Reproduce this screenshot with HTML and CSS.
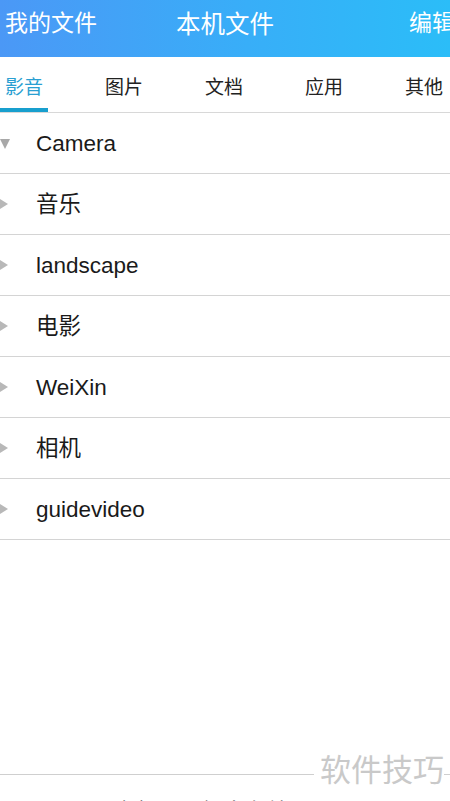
FILE: index.html
```html
<!DOCTYPE html>
<html lang="zh">
<head>
<meta charset="utf-8">
<link rel="stylesheet" href="styles.css">
</head>
<body>
<div class="page">
  <header class="topbar">
    <span class="back">我的文件</span>
    <span class="title">本机文件</span>
    <span class="edit">编辑</span>
  </header>
  <nav class="tabs">
    <div class="tab active"><span>影音</span></div>
    <div class="tab"><span>图片</span></div>
    <div class="tab"><span>文档</span></div>
    <div class="tab"><span>应用</span></div>
    <div class="tab"><span>其他</span></div>
  </nav>
  <ul class="list">
    <li class="row open"><i class="arrow"></i><span class="name">Camera</span></li>
    <li class="row"><i class="arrow"></i><span class="name">音乐</span></li>
    <li class="row"><i class="arrow"></i><span class="name">landscape</span></li>
    <li class="row"><i class="arrow"></i><span class="name">电影</span></li>
    <li class="row"><i class="arrow"></i><span class="name">WeiXin</span></li>
    <li class="row"><i class="arrow"></i><span class="name">相机</span></li>
    <li class="row"><i class="arrow"></i><span class="name">guidevideo</span></li>
  </ul>
  <footer class="footer">
    <span class="foot-text">全部　已经本存储</span>
  </footer>
  <div class="watermark">软件技巧</div>
</div>
</body>
</html>
```
FILE: styles.css
```css
* { box-sizing: border-box; }
html, body { margin: 0; padding: 0; background: #fff; }
body {
  font-family: "Liberation Sans", "Noto Sans CJK SC", sans-serif;
  color: #1a1a1a;
}
.page {
  position: relative;
  width: 450px;
  height: 801px;
  overflow: hidden;
  display: flex;
  flex-direction: column;
}
.topbar {
  height: 57px;
  flex: 0 0 57px;
  display: flex;
  align-items: center;
  padding: 0 0 16px 5px;
  background: linear-gradient(90deg, #4b98f6 0%, #38aef8 55%, #2bbdf8 100%);
  color: #fff;
  white-space: nowrap;
  font-family: "Noto Sans CJK SC", sans-serif;
}
.back { font-size: 23px; line-height: 30px; }
.title { font-size: 24.5px; line-height: 30px; margin-left: 79px; margin-top: 4px; }
.edit { font-size: 23px; line-height: 30px; margin-left: 135px; flex: 0 0 auto; }
.tabs {
  flex: 0 0 56px;
  height: 56px;
  display: flex;
  border-bottom: 1px solid #d8d8d8;
  font-family: "Noto Sans CJK SC", sans-serif;
}
.tab { flex: 0 0 100px; }
.tab span {
  display: inline-block;
  height: 55px;
  padding: 17px 5px 0;
  font-size: 19px;
  line-height: 24px;
  color: #222;
  border-bottom: 4px solid transparent;
}
.tab.active span { color: #2a9fd2; border-bottom-color: #189fce; }
.list { list-style: none; margin: 0; padding: 0; }
.row {
  height: 61px;
  display: flex;
  align-items: center;
  border-bottom: 1px solid #d4d4d4;
}
.arrow {
  width: 0; height: 0;
  border-top: 5px solid transparent;
  border-bottom: 5px solid transparent;
  border-left: 8px solid #b8b8b8;
  margin-right: 28px;
}
.row.open .arrow {
  border-left: 5px solid transparent;
  border-right: 5px solid transparent;
  border-top: 10px solid #a8a8a8;
  border-bottom: 0;
  margin-top: 2px;
  margin-right: 26px;
}
.name {
  font-size: 22.5px;
  line-height: 28px;
  padding-top: 2px;
  font-family: "Liberation Sans", "Noto Sans CJK SC", sans-serif;
}
.footer {
  margin-top: auto;
  height: 27px;
  flex: 0 0 27px;
  border-top: 1px solid #cfcfcf;
  padding: 19px 0 0 113px;
  font-family: "Noto Sans CJK SC", sans-serif;
  font-size: 22px;
  line-height: 30px;
  white-space: nowrap;
}
.watermark {
  position: absolute;
  left: 314px;
  top: 750px;
  padding-left: 6px;
  background: #fff;
  color: #c9c9c9;
  font-family: "Noto Sans CJK SC", sans-serif;
  font-size: 31px;
  line-height: 36px;
  white-space: nowrap;
}
```
